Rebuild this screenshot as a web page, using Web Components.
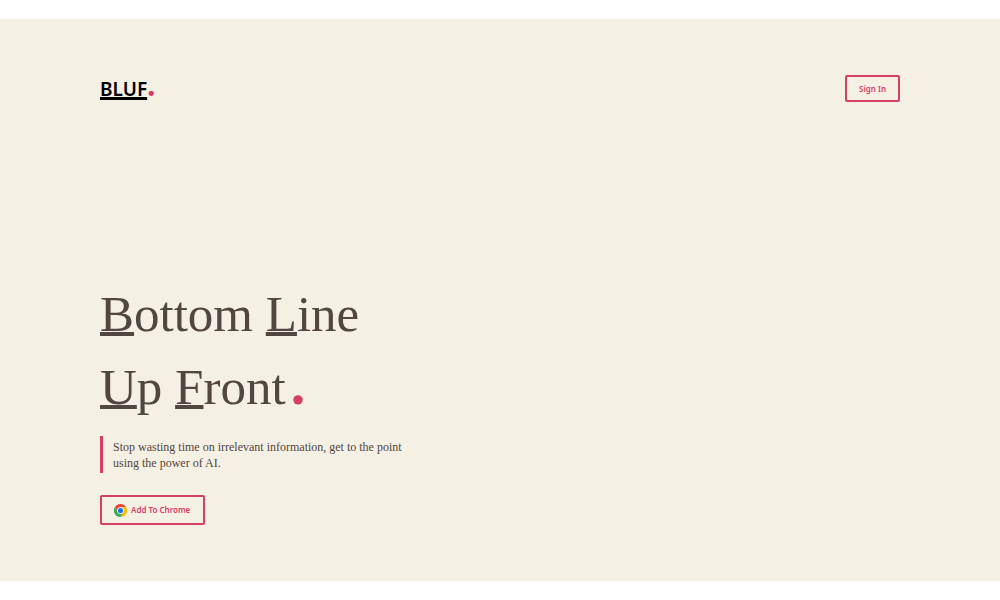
<!DOCTYPE html>
<html lang="en">
<head>
<meta charset="utf-8">
<meta name="viewport" content="width=device-width, initial-scale=1">
<title>BLUF</title>
<style>
body { margin: 0; background: #fff; --accent: #d53f67; --ink: #524640; --paper: #f5f0e4; }
</style>
</head>
<body>
<bluf-page>
  <bluf-logo slot="header"></bluf-logo>
  <bluf-button slot="header" size="small">Sign In</bluf-button>
  <bluf-hero>
    <bluf-quote slot="summary">Stop wasting time on irrelevant information, get to the point using the power of AI.</bluf-quote>
    <bluf-button slot="action"><chrome-icon slot="icon"></chrome-icon>Add To Chrome</bluf-button>
  </bluf-hero>
</bluf-page>
<script>
function define(name, html) {
  const template = document.createElement('template');
  template.innerHTML = html;
  customElements.define(name, class extends HTMLElement {
    constructor() {
      super();
      this.attachShadow({ mode: 'open' }).append(template.content.cloneNode(true));
    }
  });
}

define('bluf-page', `
<style>
:host { display: flex; flex-direction: column; box-sizing: border-box; min-height: 100vh; padding: 19px 0; }
.sheet { flex: 1; display: flex; flex-direction: column; justify-content: space-between; gap: 48px; padding: 56px 10%; background: var(--paper); }
header { display: flex; justify-content: space-between; align-items: flex-start; }
</style>
<div class="sheet">
  <header><slot name="header"></slot></header>
  <main><slot></slot></main>
</div>`);

define('bluf-logo', `
<style>
:host { display: block; font: 600 19px/28px "Noto Sans", sans-serif; color: #000; }
a { color: inherit; text-decoration: none; white-space: nowrap; }
.name { text-decoration: underline 3px; text-underline-offset: 1px; text-decoration-skip-ink: none; }
.dot { font: bold 32px/0 "Liberation Serif", serif; color: var(--accent); }
</style>
<a href="#"><span class="name">BLUF</span><span class="dot">.</span></a>`);

define('bluf-button', `
<style>
:host { display: block; }
button { display: flex; align-items: center; gap: 4px; box-sizing: border-box; height: 30px; padding: 0 13px 0 12px; border: 2px solid var(--accent); border-radius: 2px; background: transparent; color: var(--accent); font: 600 8px/12px "Noto Sans", sans-serif; white-space: nowrap; cursor: pointer; }
:host([size="small"]) button { height: 27px; padding: 0 12px; }
</style>
<button type="button"><slot name="icon"></slot><span><slot></slot></span></button>`);

define('bluf-hero', `
<style>
:host { display: flex; flex-direction: column; align-items: flex-start; gap: 22px; color: var(--ink); }
h1 { margin: 0 0 -10px; font: 400 51px/73px "Liberation Serif", serif; }
.line { display: block; white-space: nowrap; }
u { text-decoration: underline 4px; text-underline-offset: 1px; text-decoration-skip-ink: none; }
.dot { padding-left: 5px; font: bold 58px/0 "Liberation Serif", serif; color: var(--accent); }
</style>
<h1><span class="line"><u>B</u>ottom <u>L</u>ine</span> <span class="line"><u>U</u>p <u>F</u>ront<span class="dot">.</span></span></h1>
<slot name="summary"></slot>
<slot name="action"></slot>`);

define('bluf-quote', `
<style>
:host { display: block; max-width: 320px; }
blockquote { margin: 0; padding: 3px 0 2px 10px; border-left: 3px solid var(--accent); font: 400 12px/16px "Liberation Serif", serif; }
</style>
<blockquote><slot></slot></blockquote>`);

define('chrome-icon', `
<style>
:host { display: block; width: 13px; height: 13px; }
svg { display: block; width: 100%; height: 100%; }
</style>
<svg viewBox="0 0 48 48" aria-hidden="true">
  <path fill="#ea4335" d="M3.2 12A24 24 0 0 1 44.8 12H24A12 12 0 0 0 13.6 30Z"/>
  <path fill="#fbbc04" d="M44.8 12A24 24 0 0 1 24 48L34.4 30A12 12 0 0 0 24 12Z"/>
  <path fill="#34a853" d="M24 48A24 24 0 0 1 3.2 12L13.6 30A12 12 0 0 0 34.4 30Z"/>
  <circle cx="24" cy="24" r="12" fill="#fff"/>
  <circle cx="24" cy="24" r="9.5" fill="#1a73e8"/>
</svg>`);
</script>
</body>
</html>
